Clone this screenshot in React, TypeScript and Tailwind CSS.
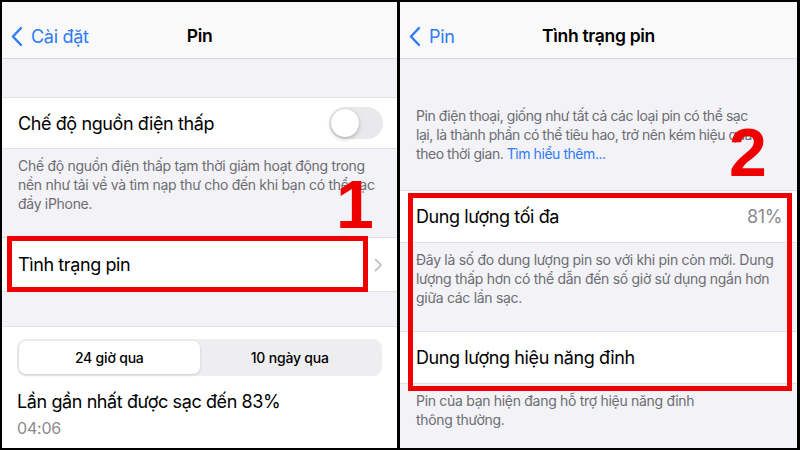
import React from "react";

const font = { fontFamily: "Inter, 'Noto Sans', sans-serif" };
const big = "text-[18px] tracking-[-0.4px] text-black";

function BackChevron() {
  return (
    <svg width="13" height="21" viewBox="0 0 13 21" fill="none" className="shrink-0">
      <path d="M11 2L3 10.5L11 19" stroke="#2f7bf5" strokeWidth="2.4" strokeLinecap="round" strokeLinejoin="round" />
    </svg>
  );
}

function NavBar({ back, title }: { back: string; title: string }) {
  return (
    <div className="relative flex h-[57px] shrink-0 items-center border-b border-[#d9d9dc] bg-[#f9f9f9] pl-[8px] pt-[13px]">
      <div className="flex items-center gap-[8px] text-[18px] tracking-[-0.3px] text-[#2f7bf5]">
        <BackChevron />
        <span>{back}</span>
      </div>
      <div className="pointer-events-none absolute inset-x-0 top-0 flex h-full items-center justify-center pt-[13px] text-[17.5px] font-semibold tracking-[-0.3px] text-black">
        {title}
      </div>
    </div>
  );
}

function Footer({ children, className = "" }: { children: React.ReactNode; className?: string }) {
  return <p className={`pl-[16px] text-[14px] leading-[19px] text-[#6d6d72] ${className}`}>{children}</p>;
}

function LeftPanel() {
  return (
    <div className="relative flex w-[395px] flex-col overflow-hidden bg-[#f2f2f7]">
      <NavBar back="Cài đặt" title="Pin" />
      <div className="h-[38px] shrink-0" />
      <div className="flex h-[52px] shrink-0 items-center justify-between border-y border-[#e0e0e3] bg-white pl-[16px] pr-[14px]">
        <span className={big}>Chế độ nguồn điện thấp</span>
        <div className="flex h-[32px] w-[54px] items-center rounded-full bg-[#e9e9eb] p-[2px]">
          <div className="h-[28px] w-[28px] rounded-full bg-white shadow-[0_2px_4px_rgba(0,0,0,0.22),0_0_1px_rgba(0,0,0,0.2)]" />
        </div>
      </div>
      <Footer className="h-[64px] shrink-0 pr-[14px] pt-[7px] tracking-[-0.3px]">
        Chế độ nguồn điện thấp tạm thời giảm hoạt động trong nền như tải về và tìm nạp thư cho đến khi bạn có thể sạc đầy iPhone.
      </Footer>
      <div className="h-[24px] shrink-0" />
      <div className="flex h-[55px] shrink-0 items-center justify-between border-y border-[#e0e0e3] bg-white pl-[16px] pr-[14px]">
        <span className={big}>Tình trạng pin</span>
        <svg width="9" height="14" viewBox="0 0 9 14" fill="none">
          <path d="M1.5 1.5L7 7L1.5 12.5" stroke="#c4c4c7" strokeWidth="1.8" strokeLinecap="round" strokeLinejoin="round" />
        </svg>
      </div>
      <div className="h-[34px] shrink-0" />
      <div className="flex flex-1 flex-col border-t border-[#e0e0e3] bg-white px-[15px] pt-[12px]">
        <div className="flex h-[37px] shrink-0 rounded-[9px] bg-[#eeeef0] p-[2px]">
          <div className="flex flex-1 items-center justify-center rounded-[7px] bg-white text-[14px] font-medium tracking-[-0.2px] text-black shadow-[0_1px_3px_rgba(0,0,0,0.15)]">
            24 giờ qua
          </div>
          <div className="flex flex-1 items-center justify-center text-[14px] font-medium tracking-[-0.2px] text-black">
            10 ngày qua
          </div>
        </div>
        <div className={`mt-[14px] leading-[24px] ${big}`}>Lần gần nhất được sạc đến 83%</div>
        <div className="mt-[2px] text-[16px] tracking-[-0.2px] text-[#8a8a8e]">04:06</div>
      </div>

      <div className="absolute left-[5px] top-[234px] h-[56px] w-[361px] border-[5px] border-[#ee0000]" />
      <div
        className="absolute left-[334px] top-[168px] text-[68px] font-bold leading-none text-[#ee0000]"
        style={{ fontFamily: "'Liberation Sans', Arial, sans-serif" }}
      >
        1
      </div>
    </div>
  );
}

function RightPanel() {
  return (
    <div className="relative flex w-[397px] flex-col overflow-hidden bg-[#f2f2f7]">
      <NavBar back="Pin" title="Tình trạng pin" />
      <Footer className="pr-[6px] pt-[47px] tracking-[-0.45px]">
        Pin điện thoại, giống như tất cả các loại pin có thể sạc
        <br />
        lại, là thành phần có thể tiêu hao, trở nên kém hiệu quả
        <br />
        theo thời gian. <span className="text-[#2f7bf5]">Tìm hiểu thêm...</span>
      </Footer>
      <div className="h-[27px] shrink-0" />
      <div className="flex h-[53px] shrink-0 items-center justify-between border-y border-[#e0e0e3] bg-white pl-[16px] pr-[15px]">
        <span className={big}>Dung lượng tối đa</span>
        <span className="text-[18px] tracking-[-0.4px] text-[#8a8a8e]">81%</span>
      </div>
      <Footer className="pr-[12px] pt-[7px] tracking-[-0.3px]">
        Đây là số đo dung lượng pin so với khi pin còn mới. Dung lượng thấp hơn có thể dẫn đến số giờ sử dụng ngắn hơn giữa các lần sạc.
      </Footer>
      <div className="h-[24px] shrink-0" />
      <div className="flex h-[53px] shrink-0 items-center border-y border-[#e0e0e3] bg-white pl-[16px]">
        <span className={big}>Dung lượng hiệu năng đỉnh</span>
      </div>
      <Footer className="pr-[80px] pt-[7px] tracking-[-0.3px]">
        Pin của bạn hiện đang hỗ trợ hiệu năng đỉnh thông thường.
      </Footer>

      <div className="absolute left-[8px] top-[191px] h-[198px] w-[384px] border-[5px] border-[#ee0000]" />
      <div
        className="absolute left-[329px] top-[116px] text-[68px] font-bold leading-none text-[#ee0000]"
        style={{ fontFamily: "'Liberation Sans', Arial, sans-serif" }}
      >
        2
      </div>
    </div>
  );
}

export default function App() {
  return (
    <div className="flex h-[450px] w-[800px] gap-[3px] bg-black pb-[2px] pl-[2px] pr-[3px] pt-[2px]" style={font}>
      <LeftPanel />
      <RightPanel />
    </div>
  );
}
